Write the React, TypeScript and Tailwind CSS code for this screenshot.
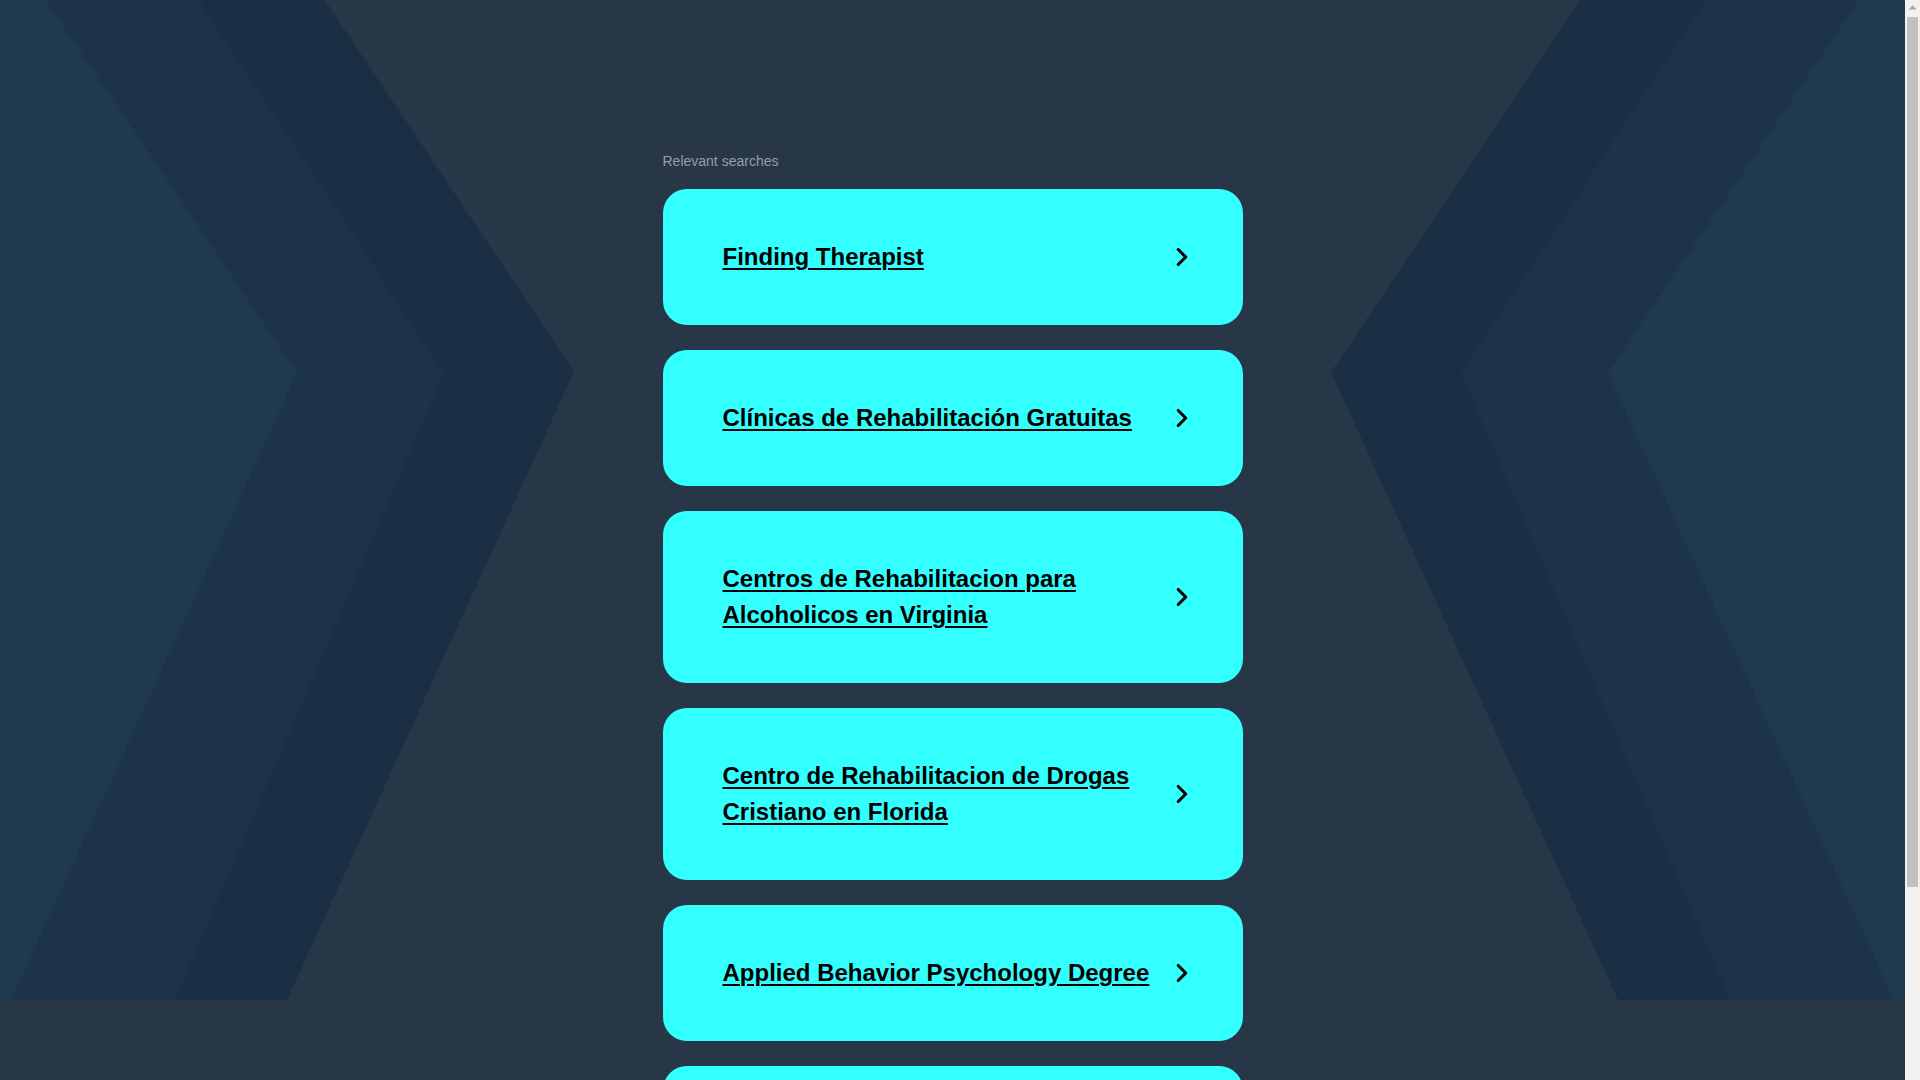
import { ChevronRight } from "lucide-react";

const searches = [
  "Finding Therapist",
  "Clínicas de Rehabilitación Gratuitas",
  "Centros de Rehabilitacion para Alcoholicos en Virginia",
  "Centro de Rehabilitacion de Drogas Cristiano en Florida",
  "Applied Behavior Psychology Degree",
  "Online Counseling Services",
];

const Chevrons = ({ flip }: { flip?: boolean }) => (
  <svg
    className={`absolute top-0 h-[1000px] w-[600px] pointer-events-none ${flip ? "right-0 -scale-x-100" : "left-0"}`}
    viewBox="0 0 600 1000"
    preserveAspectRatio="none"
  >
    <polygon points="0,0 325,0 574,372 287,1000 0,1000" fill="#1b2f44" />
    <polygon points="0,0 199,0 444,373 175,1000 0,1000" fill="#1d3349" />
    <polygon points="0,0 46,0 297,373 11,1000 0,1000" fill="#1f3a50" />
  </svg>
);

const SearchCard = ({ title }: { title: string }) => (
  <a
    href="#"
    className="flex items-center bg-[#33ffff] rounded-[24px] pl-[60px] pr-[46px] py-[50px] mb-[25px] text-black"
  >
    <span className="flex-1 pr-[12px] text-[24px] leading-[36px] font-bold underline decoration-2 underline-offset-[3px]">
      {title}
    </span>
    <ChevronRight className="w-[30px] h-[30px] shrink-0" strokeWidth={2.5} />
  </a>
);

// the browser's scrollbar, as it shows in the screenshot
const Scrollbar = () => (
  <div className="fixed top-0 right-0 h-screen w-[15px] bg-[#f1f1f1] z-20 flex flex-col items-center">
    <svg className="w-[15px] h-[15px] shrink-0" viewBox="0 0 15 15">
      <polygon points="3.5,9.5 7.5,5.5 11.5,9.5" fill="#a3a3a3" />
    </svg>
    <div className="w-[11px] h-[870px] mt-[2px] bg-[#c1c1c1]" />
  </div>
);

const App = () => {
  return (
    <div
      className="relative min-h-screen mr-[15px] bg-[#283747] overflow-hidden"
      style={{ fontFamily: '"Liberation Sans", Arial, sans-serif' }}
    >
      <Chevrons />
      <Chevrons flip />

      <div className="relative w-[580px] mx-auto pt-[151px] pb-[60px]">
        <div className="text-[14px] leading-[20px] text-[#979da4] mb-[18px]">
          Relevant searches
        </div>
        {searches.map((s) => (
          <SearchCard key={s} title={s} />
        ))}
      </div>

      <Scrollbar />
    </div>
  );
};

export default App;
